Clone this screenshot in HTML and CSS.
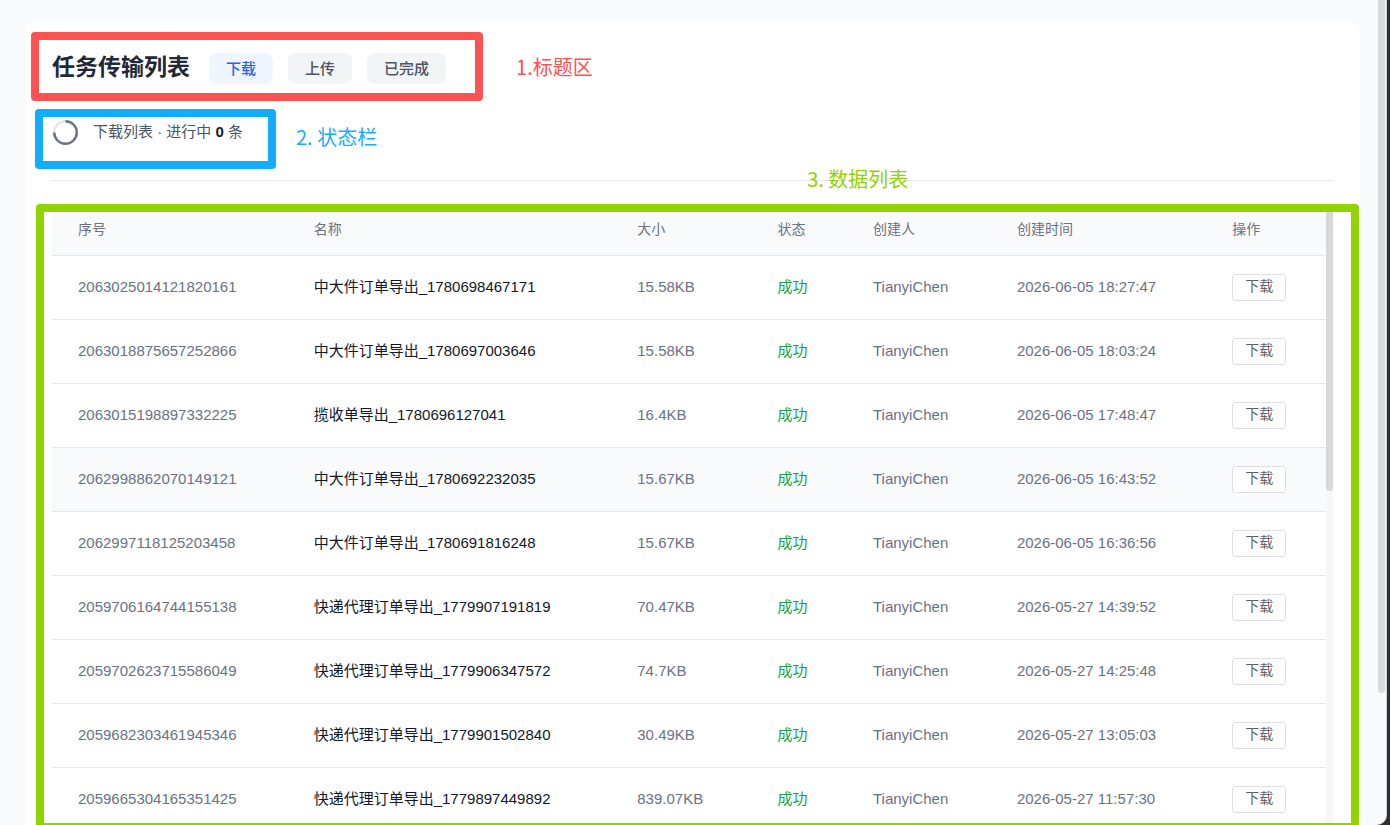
FILE: index.html
```html
<!DOCTYPE html>
<html lang="zh-CN">
<head>
<meta charset="utf-8">
<title>任务传输列表</title>
<link rel="stylesheet" href="styles.css">
</head>
<body>
<div class="app">
  <main class="card">
    <header class="task-header">
      <h1 class="title">任务传输列表</h1>
      <nav class="tabs">
        <button class="tab tab-active" type="button">下载</button>
        <button class="tab" type="button">上传</button>
        <button class="tab" type="button">已完成</button>
      </nav>
      <div class="callout callout-title"><span class="note note-title">1.标题区</span></div>
    </header>
    <section class="status">
      <div class="status-content">
        <svg class="spinner" viewBox="0 0 26 26" aria-hidden="true">
          <circle cx="13.5" cy="13.5" r="11.3" fill="none" stroke="#e5e7eb" stroke-width="2.4"/>
          <path d="M13.5 2.2A11.3 11.3 0 1 1 2.2 13.5" fill="none" stroke="#6b7280" stroke-width="2.4"/>
        </svg>
        <p class="status-text">下载列表 · 进行中 <strong>0</strong> 条</p>
        <div class="callout callout-status"><span class="note note-status">2. 状态栏</span></div>
      </div>
    </section>
    <section class="list">
      <div class="callout callout-list"><span class="note note-list">3. 数据列表</span></div>
      <table class="table">
        <colgroup><col class="c-id"><col class="c-name"><col class="c-size"><col class="c-state"><col class="c-user"><col class="c-time"><col></colgroup>
        <thead>
          <tr><th>序号</th><th>名称</th><th>大小</th><th>状态</th><th>创建人</th><th>创建时间</th><th>操作</th></tr>
        </thead>
        <tbody>
          <tr><td>2063025014121820161</td><td class="name">中大件订单导出_1780698467171</td><td>15.58KB</td><td class="ok">成功</td><td>TianyiChen</td><td>2026-06-05 18:27:47</td><td class="action"><button class="download" type="button">下载</button></td></tr>
          <tr><td>2063018875657252866</td><td class="name">中大件订单导出_1780697003646</td><td>15.58KB</td><td class="ok">成功</td><td>TianyiChen</td><td>2026-06-05 18:03:24</td><td class="action"><button class="download" type="button">下载</button></td></tr>
          <tr><td>2063015198897332225</td><td class="name">揽收单导出_1780696127041</td><td>16.4KB</td><td class="ok">成功</td><td>TianyiChen</td><td>2026-06-05 17:48:47</td><td class="action"><button class="download" type="button">下载</button></td></tr>
          <tr class="hovered"><td>2062998862070149121</td><td class="name">中大件订单导出_1780692232035</td><td>15.67KB</td><td class="ok">成功</td><td>TianyiChen</td><td>2026-06-05 16:43:52</td><td class="action"><button class="download" type="button">下载</button></td></tr>
          <tr><td>2062997118125203458</td><td class="name">中大件订单导出_1780691816248</td><td>15.67KB</td><td class="ok">成功</td><td>TianyiChen</td><td>2026-06-05 16:36:56</td><td class="action"><button class="download" type="button">下载</button></td></tr>
          <tr><td>2059706164744155138</td><td class="name">快递代理订单导出_1779907191819</td><td>70.47KB</td><td class="ok">成功</td><td>TianyiChen</td><td>2026-05-27 14:39:52</td><td class="action"><button class="download" type="button">下载</button></td></tr>
          <tr><td>2059702623715586049</td><td class="name">快递代理订单导出_1779906347572</td><td>74.7KB</td><td class="ok">成功</td><td>TianyiChen</td><td>2026-05-27 14:25:48</td><td class="action"><button class="download" type="button">下载</button></td></tr>
          <tr><td>2059682303461945346</td><td class="name">快递代理订单导出_1779901502840</td><td>30.49KB</td><td class="ok">成功</td><td>TianyiChen</td><td>2026-05-27 13:05:03</td><td class="action"><button class="download" type="button">下载</button></td></tr>
          <tr><td>2059665304165351425</td><td class="name">快递代理订单导出_1779897449892</td><td>839.07KB</td><td class="ok">成功</td><td>TianyiChen</td><td>2026-05-27 11:57:30</td><td class="action"><button class="download" type="button">下载</button></td></tr>
        </tbody>
      </table>
      <div class="list-track"><div class="list-thumb"></div></div>
    </section>
  </main>
  <div class="page-thumb"></div>
</div>
</body>
</html>
```
FILE: styles.css
```css
* { box-sizing: border-box; }

body {
  margin: 0;
  height: 100vh;
  overflow: hidden;
  padding-right: 3px;
  background: #303030;
  font-family: "Liberation Sans", "Noto Sans CJK SC", sans-serif;
  font-size: 15px;
  color: #6b7280;
}

.app {
  position: relative;
  height: 100%;
  overflow: hidden;
  padding: 23px 26px 0 25px;
  background: #f9fafc;
  border-right: 1px solid #d0d1d2;
  border-bottom-right-radius: 10px;
}

.card {
  padding: 29px 27px;
  background: #fff;
  border-radius: 8px;
}

.task-header {
  position: relative;
  display: flex;
  align-items: center;
  gap: 19px;
  width: fit-content;
  height: 32px;
}

.title {
  margin: 0;
  font-size: 23px;
  line-height: 28px;
  padding-bottom: 2px;
  font-weight: 700;
  color: #1f2937;
}

.tabs { display: flex; gap: 15px; }

.tab {
  height: 31px;
  padding: 0 17px 2px;
  border: 0;
  border-radius: 8px;
  background: #f3f4f6;
  color: #4b5563;
  font: inherit;
  font-weight: 500;
}

.tab-active { background: #eff6ff; color: #2563eb; }

.status {
  padding: 35px 0;
  border-bottom: 1px solid #e5e7eb;
}

.status-content {
  position: relative;
  display: flex;
  align-items: center;
  gap: 15px;
  width: fit-content;
}

.spinner { width: 26px; height: 26px; }

.status-text {
  margin: 0;
  line-height: 26px;
  color: #4b5563;
}

.status-text strong { color: #111827; }

.list {
  position: relative;
  display: flex;
  margin-top: 24px;
}

.table {
  flex: 1;
  table-layout: fixed;
  border-collapse: separate;
  border-spacing: 0;
}

.c-id { width: 18.5%; }
.c-name { width: 25.4%; }
.c-size { width: 11%; }
.c-state { width: 7.5%; }
.c-user { width: 11.3%; }
.c-time { width: 16.9%; }

.table th,
.table td {
  padding: 0 0 2px 26px;
  border-bottom: 1px solid #e5e7eb;
  line-height: 20px;
  text-align: left;
  white-space: nowrap;
}

.table th {
  height: 51px;
  background: #f9fafc;
  font-size: 14px;
  font-weight: 400;
}

.table td { height: 64px; }
.table .action { padding-bottom: 0; }

.table .name { color: #111827; }
.table .ok { color: #16a34a; }
.hovered { background: #f9fafc; }

.download {
  display: block;
  height: 27px;
  padding: 0 12px 3px;
  border: 1px solid #dcdfe6;
  border-radius: 3px;
  background: #fff;
  color: #606266;
  font: inherit;
  font-size: 14px;
}

.list-track {
  width: 7px;
  background: #f7f7f8;
}

.list-thumb {
  height: 286px;
  border-radius: 4px;
  background: #d7d8da;
}

.page-thumb {
  position: absolute;
  top: 0;
  right: 1px;
  width: 7px;
  height: 84%;
  border-radius: 0 0 4px 4px;
  background: #d9dadc;
}

/* Annotation frames and labels over the page */
.callout {
  position: absolute;
  border: 8px solid;
  border-radius: 4px;
  pointer-events: none;
}

.callout-title { inset: -20px -37px -17px -21px; color: #fc5352; }
.callout-status { inset: -10px -33px -24px -17px; color: #12adff; }
.callout-list { inset: -1px -26px 1px -16px; color: #91d300; }

.note {
  position: absolute;
  font-family: "Noto Sans CJK SC", sans-serif;
  font-size: 20px;
  line-height: 28px;
  font-weight: 400;
  white-space: nowrap;
}

.note-title { left: 100%; top: 13px; margin-left: 41px; }
.note-status { left: 100%; top: 6px; margin-left: 28px; }
.note-list { left: 59%; top: -47px; margin-left: -8px; }
```
